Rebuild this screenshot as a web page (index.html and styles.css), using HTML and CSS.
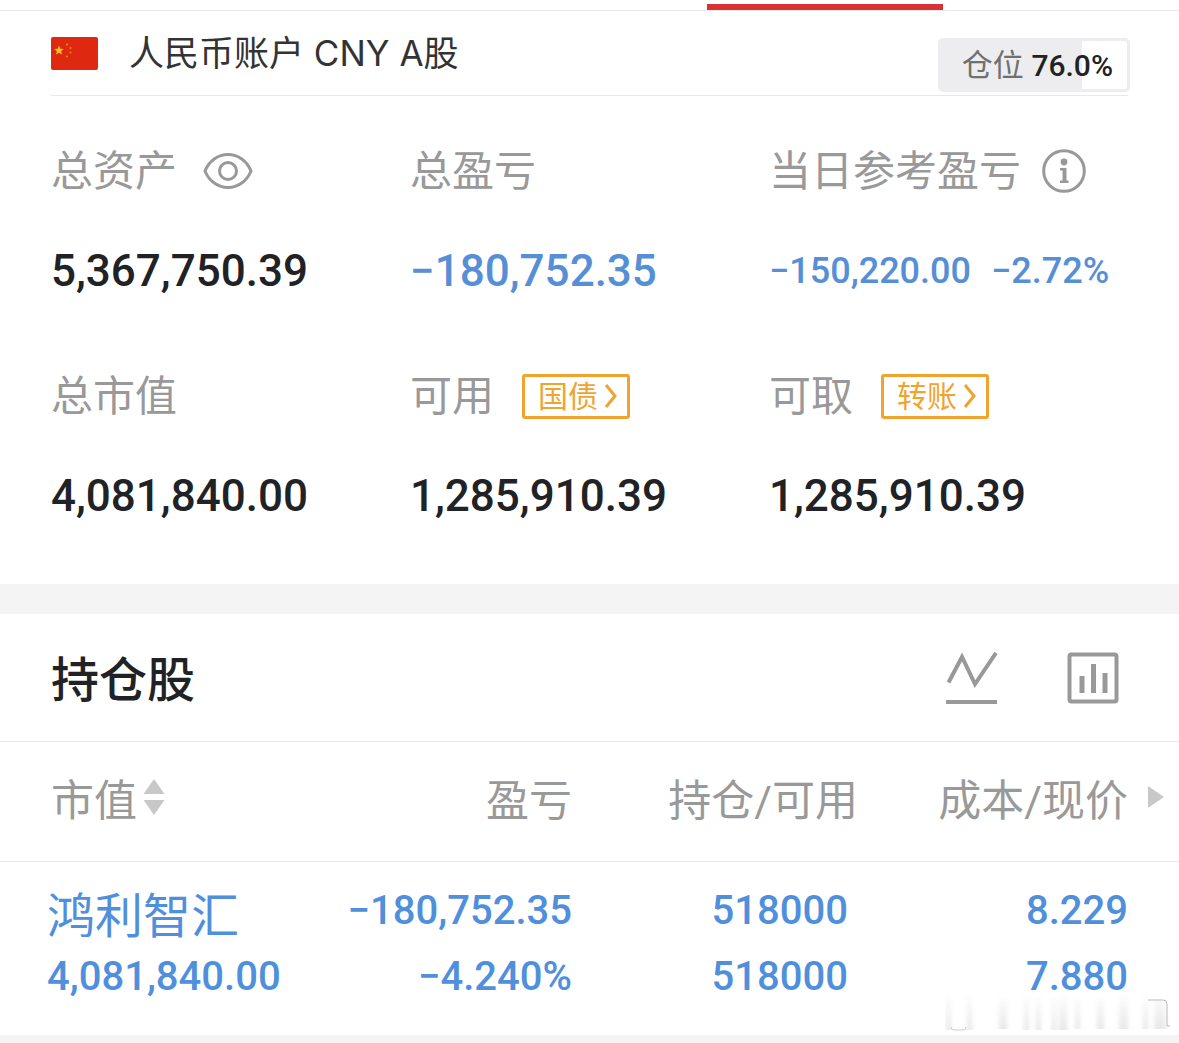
FILE: index.html
```html
<!DOCTYPE html>
<html lang="zh-CN">
<head>
<meta charset="utf-8">
<meta name="viewport" content="width=device-width, initial-scale=1">
<title>人民币账户</title>
<link rel="stylesheet" href="styles.css">
</head>
<body>
<div class="tabbar"><div class="tabbar-active"></div></div>
<main>
  <section class="account">
    <header class="account-head">
      <svg class="flag" viewBox="0 0 47 33" aria-hidden="true">
        <rect width="47" height="33" rx="2" fill="#de2910"/>
        <path d="M8 8.500l1.300 3.300 3.500.2-2.700 2.200.9 3.400-3-1.900-3 1.900.9-3.400-2.700-2.200 3.500-.2z" fill="#ffc21a"/>
        <g fill="#f4801c"><circle cx="16" cy="7.500" r="1.100"/><circle cx="19.500" cy="11" r="1.100"/><circle cx="19.500" cy="15.500" r="1.100"/><circle cx="16" cy="19.500" r="1.100"/></g>
      </svg>
      <h1 class="account-name">人民币账户 CNY A股</h1>
      <div class="position">仓位 <strong class="position-value">76.0%</strong></div>
    </header>
    <dl class="stats">
      <div class="stat">
        <dt class="stat-label">总资产
          <button class="icon-button eye" type="button" aria-label="隐藏金额">
            <svg width="50" height="38" viewBox="0 0 50 38" fill="none" stroke="#999" stroke-width="3"><path d="M2 19C6 9 15 2.500 25 2.500S44 9 48 19C44 29 35 35.500 25 35.500S6 29 2 19z"/><circle cx="25" cy="19" r="8.500"/></svg>
          </button>
        </dt>
        <dd class="stat-value">5,367,750.39</dd>
      </div>
      <div class="stat">
        <dt class="stat-label">总盈亏</dt>
        <dd class="stat-value loss">−180,752.35</dd>
      </div>
      <div class="stat">
        <dt class="stat-label">当日参考盈亏
          <button class="icon-button info" type="button" aria-label="说明">
            <svg width="44" height="44" viewBox="0 0 44 44"><circle cx="22" cy="22" r="20.300" fill="none" stroke="#999" stroke-width="3"/><circle cx="22" cy="13" r="3.400" fill="#999"/><path d="M18 19h6.500v12.500h2V34h-8.500v-2.500h2.500v-10H18z" fill="#999"/></svg>
          </button>
        </dt>
        <dd class="stat-value loss daily"><span>−150,220.00</span><span>−2.72%</span></dd>
      </div>
      <div class="stat">
        <dt class="stat-label">总市值</dt>
        <dd class="stat-value">4,081,840.00</dd>
      </div>
      <div class="stat">
        <dt class="stat-label">可用
          <button class="tag" type="button">国债<svg width="14" height="26" viewBox="0 0 14 26" fill="none" stroke="#f0a42e" stroke-width="3"><path d="M2 2l9 11-9 11"/></svg></button>
        </dt>
        <dd class="stat-value">1,285,910.39</dd>
      </div>
      <div class="stat">
        <dt class="stat-label">可取
          <button class="tag" type="button">转账<svg width="14" height="26" viewBox="0 0 14 26" fill="none" stroke="#f0a42e" stroke-width="3"><path d="M2 2l9 11-9 11"/></svg></button>
        </dt>
        <dd class="stat-value">1,285,910.39</dd>
      </div>
    </dl>
  </section>

  <section class="holdings">
    <header class="holdings-head">
      <h2 class="holdings-title">持仓股</h2>
      <button class="icon-button" type="button" aria-label="走势">
        <svg width="52" height="52" viewBox="0 0 52 52" fill="none" stroke="#999" stroke-width="4"><path d="M2.500 30.500L16 5l13 27L50 1"/><path d="M0 50h51"/></svg>
      </button>
      <button class="icon-button" type="button" aria-label="分析">
        <svg width="52" height="52" viewBox="0 0 52 52" fill="none" stroke="#999" stroke-width="4"><rect x="2.500" y="2.500" width="47" height="47" rx="2"/><path d="M15 24v17M26.500 12v29M38 21v20" stroke-width="5"/></svg>
      </button>
    </header>
    <table class="table">
      <thead>
        <tr>
          <th class="col-name" scope="col"><button class="sort" type="button">市值<svg width="22" height="36" viewBox="0 0 22 36" fill="#c8c8c8"><path d="M11 0l10.500 15H.5zM11 36L.5 21h21z"/></svg></button></th>
          <th class="col-profit" scope="col">盈亏</th>
          <th class="col-amount" scope="col"><span class="overhang">持仓/可用</span></th>
          <th class="col-price" scope="col">成本/现价</th>
          <td class="col-more"><button class="icon-button more" type="button" aria-label="更多列"><svg width="16" height="22" viewBox="0 0 16 22" fill="#c8c8c8"><path d="M0 0l16 11L0 22z"/></svg></button></td>
        </tr>
      </thead>
      <tbody>
        <tr>
          <td class="col-name"><a class="stock" href="#stock">鸿利智汇</a><span class="line">4,081,840.00</span></td>
          <td><span class="line">−180,752.35</span><span class="line">−4.240%</span></td>
          <td><span class="line">518000</span><span class="line">518000</span></td>
          <td><span class="line">8.229</span><span class="line">7.880</span></td>
          <td class="col-more"></td>
        </tr>
      </tbody>
    </table>
    <svg class="smudge" viewBox="0 0 230 42" aria-hidden="true">
      <defs>
        <linearGradient id="fade" x1="0" y1="0" x2="0" y2="1"><stop offset="0" stop-color="#999" stop-opacity="0"/><stop offset="1" stop-color="#999" stop-opacity=".24"/></linearGradient>
        <filter id="soft" x="-20%" width="140%"><feGaussianBlur stdDeviation="2 0"/></filter>
      </defs>
      <g fill="url(#fade)" filter="url(#soft)"><path d="M1 2h5v37H1zM22 2h5v37h-5zM54 6h8v32h-8zM79 4h5v35h-5zM91 6h5v33h-5zM107 6h4v33h-4zM114 4h8v35h-8zM130 8h5v30h-5zM152 6h7v32h-7zM174 4h9v34h-9zM198 6h5v32h-5zM209 8h12v30h-12z"/></g>
      <path d="M6 36q0 3 3 3h9q3 0 3-3" fill="none" stroke="#ccc"/>
      <path d="M203 9h15q4 0 4 4v22h3" fill="none" stroke="#bbb"/>
    </svg>
  </section>
</main>
</body>
</html>
```
FILE: styles.css
```css
* {
  box-sizing: border-box;
}

body {
  margin: 0;
  min-height: 100vh;
  background: #f4f4f4;
  color: #202225;
  font-family: Roboto, "Noto Sans CJK SC", sans-serif;
}

h1, h2, dl, dd {
  margin: 0;
  font-weight: 400;
}

button {
  margin: 0;
  padding: 0;
  border: 0;
  background: none;
  color: inherit;
  font: inherit;
}

svg {
  display: block;
}

.tabbar {
  height: 11px;
  padding-top: 4px;
  border-bottom: 1px solid #e8e8e8;
  background: #fff;
}

.tabbar-active {
  width: 20%;
  height: 6px;
  margin-left: 60%;
  background: #d93232;
}

.account {
  padding: 0 51px 60px;
  background: #fff;
}

.account-head {
  display: flex;
  align-items: center;
  height: 85px;
  border-bottom: 1px solid #e8e8e8;
}

.flag {
  width: 47px;
  height: 33px;
}

.account-name {
  flex: 1;
  margin-left: 31px;
  color: #333;
  font-family: Inter, "Noto Sans CJK SC", sans-serif;
  font-size: 35px;
  line-height: 48px;
}

.position {
  align-self: flex-end;
  height: 54px;
  margin: 0 -2px 3px 0;
  padding: 0 14px 0 21px;
  border: 3px solid #ededef;
  border-radius: 5px;
  background: linear-gradient(90deg, #ededef 76%, #fff 76%);
  color: #707070;
  font-size: 31px;
  line-height: 50px;
}

.position-value {
  color: #222;
  font-size: 30px;
  font-weight: 500;
}

.stats {
  display: grid;
  grid-template-columns: repeat(3, 1fr);
  row-gap: 71px;
  padding-top: 49px;
}

.stat-label {
  display: flex;
  align-items: center;
  height: 54px;
  color: #999;
  font-size: 42px;
  line-height: 54px;
  white-space: nowrap;
}

.stat-value {
  margin-top: 44px;
  font-size: 44px;
  font-weight: 500;
  line-height: 56px;
  white-space: nowrap;
}

.daily {
  display: flex;
  gap: 20px;
  font-size: 36px;
}

.loss {
  color: #568fd6;
}

.eye {
  margin: 0 0 2px 26px;
}

.info {
  margin: 0 0 2px 21px;
}

.tag {
  display: flex;
  align-items: center;
  gap: 6px;
  height: 45px;
  margin: 0 0 2px 28px;
  padding: 0 9px 0 13px;
  border: 3px solid #f0a42e;
  border-radius: 3px;
  color: #f0a42e;
  font-size: 30px;
  line-height: 39px;
}

.holdings {
  position: relative;
  margin-top: 30px;
  background: #fff;
}

.holdings-head {
  display: flex;
  align-items: center;
  gap: 69px;
  height: 128px;
  padding: 0 60px 0 51px;
  border-bottom: 1px solid #e8e8e8;
}

.holdings-title {
  flex: 1;
  padding-top: 6px;
  font-size: 48px;
  font-weight: 500;
  line-height: 64px;
}

.table {
  width: 100%;
  border-collapse: collapse;
  table-layout: fixed;
}

.table th,
.table td {
  padding: 0;
  text-align: right;
  white-space: nowrap;
}

.table th,
.table thead td {
  height: 119px;
  padding-bottom: 8px;
  border-bottom: 1px solid #e8e8e8;
  color: #999;
  font-size: 43px;
  font-weight: 400;
}

.table tbody td {
  height: 174px;
  padding-top: 16px;
  color: #4f8fdc;
  font-size: 40px;
  font-weight: 500;
  vertical-align: top;
}

.table .col-name {
  width: 26%;
  padding-left: 47px;
  text-align: left;
}

.table th.col-name {
  padding-left: 51px;
}

.col-amount {
  width: 276px;
}

.overhang {
  margin-right: -10px;
}

.col-price {
  width: 280px;
}

.table .col-more {
  width: 51px;
  padding-left: 20px;
  text-align: left;
}

.more {
  display: block;
}

.sort {
  display: flex;
  align-items: center;
  gap: 6px;
}

.stock {
  display: block;
  padding-top: 12px;
  color: inherit;
  font-size: 48px;
  font-weight: 400;
  line-height: 54px;
  text-decoration: none;
}

.line {
  display: block;
  line-height: 66px;
}

.smudge {
  position: absolute;
  right: 4px;
  bottom: 2px;
  width: 230px;
  height: 42px;
}
```
